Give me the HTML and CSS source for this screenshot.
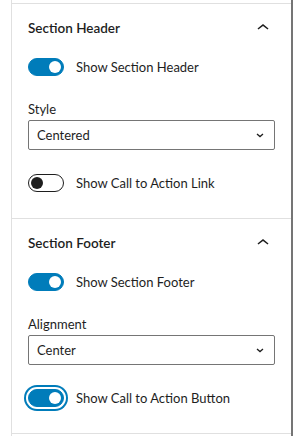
FILE: index.html
```html
<!DOCTYPE html>
<html lang="en">
<head>
    <meta charset="UTF-8">
    <meta name="viewport" content="width=device-width, initial-scale=1.0">
    <title>Section settings</title>
    <link rel="stylesheet" href="styles.css">
</head>
<body>
    <div class="panel">
        <div class="section-prev"></div>

        <div class="section">
            <div class="section-title">
                <span>Section Header</span>
                <svg class="chevron-up" width="24" height="24" viewBox="0 0 24 24"><path d="M6.5 12.4L12 8l5.5 4.4-.9 1.2L12 10l-4.6 3.6-.9-1.2z"/></svg>
            </div>
            <div class="toggle-row">
                <span class="toggle on"><span class="thumb"></span></span>
                <span class="toggle-label">Show Section Header</span>
            </div>
            <div class="field">
                <label>Style</label>
                <div class="select">
                    <span>Centered</span>
                    <svg width="8" height="5" viewBox="0 0 8 5"><path d="M1 1l3 2.6L7 1" fill="none" stroke="#1e1e1e" stroke-width="1.3"/></svg>
                </div>
            </div>
            <div class="toggle-row">
                <span class="toggle"><span class="thumb"></span></span>
                <span class="toggle-label">Show Call to Action Link</span>
            </div>
        </div>

        <div class="section">
            <div class="section-title">
                <span>Section Footer</span>
                <svg class="chevron-up" width="24" height="24" viewBox="0 0 24 24"><path d="M6.5 12.4L12 8l5.5 4.4-.9 1.2L12 10l-4.6 3.6-.9-1.2z"/></svg>
            </div>
            <div class="toggle-row">
                <span class="toggle on"><span class="thumb"></span></span>
                <span class="toggle-label">Show Section Footer</span>
            </div>
            <div class="field">
                <label>Alignment</label>
                <div class="select">
                    <span>Center</span>
                    <svg width="8" height="5" viewBox="0 0 8 5"><path d="M1 1l3 2.6L7 1" fill="none" stroke="#1e1e1e" stroke-width="1.3"/></svg>
                </div>
            </div>
            <div class="toggle-row">
                <span class="toggle on focused"><span class="thumb"></span></span>
                <span class="toggle-label">Show Call to Action Button</span>
            </div>
        </div>
    </div>
</body>
</html>
```

FILE: styles.css
```css
body {
    margin: 0;
    background: #fff;
    font-family: 'Lato', sans-serif;
    font-size: 13px;
    color: #1e1e1e;
}
.panel {
    margin-left: 11px;
    height: 436px;
    border-left: 1px solid #e0e0e0;
    border-right: 2px solid #757575;
    box-sizing: border-box;
}
.section-prev {
    height: 3px;
    border-bottom: 1px solid #e0e0e0;
}
.section {
    padding: 0 16px 26px;
    border-bottom: 1px solid #e0e0e0;
}
.section-title {
    height: 48px;
    display: flex;
    align-items: center;
    justify-content: space-between;
    font-size: 13.5px;
    font-weight: 600;
}
.chevron-up {
    fill: #1e1e1e;
}
.toggle-row {
    display: flex;
    align-items: center;
    gap: 12px;
    margin-top: 6px;
    height: 18px;
}
.toggle {
    width: 36px;
    height: 18px;
    box-sizing: border-box;
    border: 1px solid #1e1e1e;
    border-radius: 9px;
    background: #fff;
    display: flex;
    align-items: center;
    padding: 0 2px;
}
.thumb {
    width: 12px;
    height: 12px;
    border-radius: 50%;
    background: #1e1e1e;
}
.toggle.on {
    background: #007cba;
    border-color: #007cba;
    justify-content: flex-end;
}
.toggle.on .thumb {
    background: #fff;
}
.toggle.focused {
    box-shadow: 0 0 0 2px #fff, 0 0 0 4px #007cba;
}
.field {
    margin-top: 24px;
    margin-bottom: 24px;
}
.field label {
    display: block;
    line-height: 18px;
    margin-bottom: 2px;
}
.select {
    height: 30px;
    box-sizing: border-box;
    border: 1px solid #757575;
    border-radius: 2px;
    display: flex;
    align-items: center;
    justify-content: space-between;
    padding: 0 10px 0 8px;
}
.field + .toggle-row {
    margin-top: 0;
}
```
